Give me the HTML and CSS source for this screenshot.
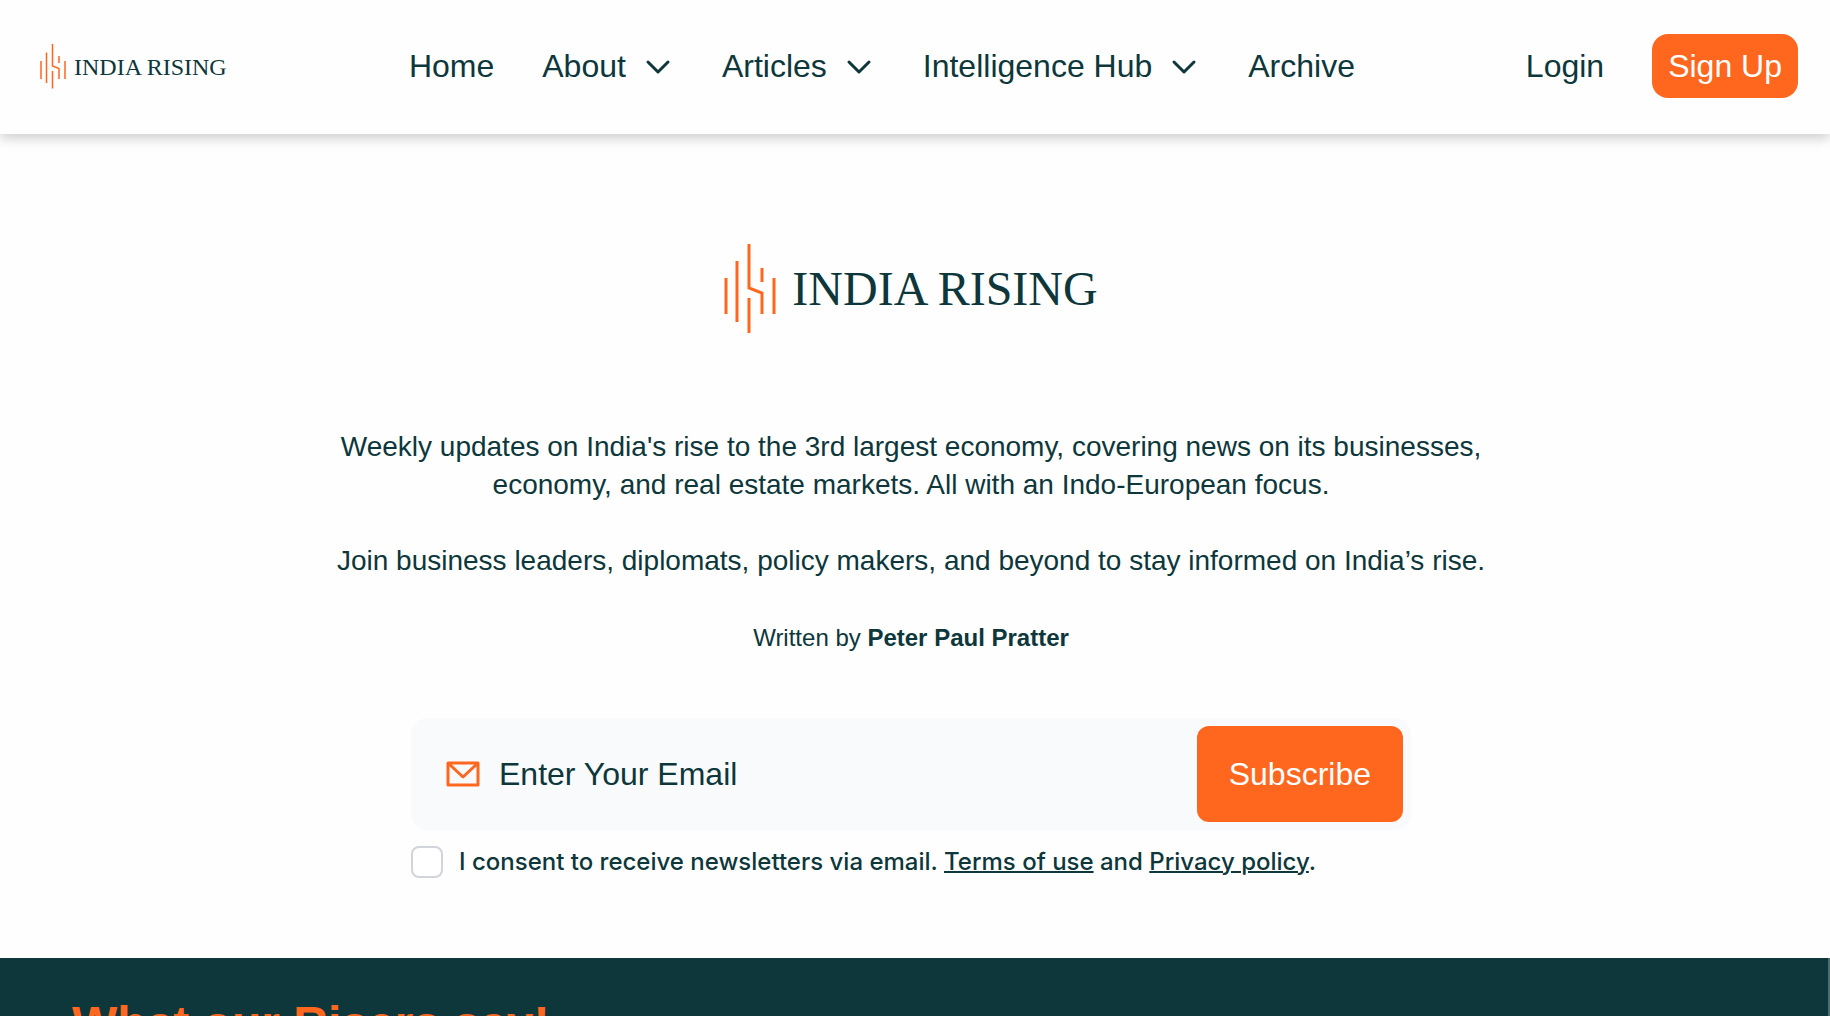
FILE: index.html
```html
<!DOCTYPE html>
<html lang="en">
<head>
  <meta charset="utf-8">
  <title>India Rising</title>
  <link rel="stylesheet" href="styles.css">
</head>
<body>
  <svg class="defs" width="0" height="0">
    <symbol id="mark" viewBox="0 0 52 92">
      <path d="M2 36V72M13 19V80M25 2V46L38 51V72M25 56V91M38 26V40M50 36V72" fill="none" stroke="#ff671f" stroke-width="3"/>
    </symbol>
    <symbol id="chevron" viewBox="0 0 32 32">
      <path d="M6 12L16 22L26 12" fill="none" stroke="#0d373b" stroke-width="3" stroke-linecap="round" stroke-linejoin="round"/>
    </symbol>
  </svg>

  <header class="header">
    <a href="#" class="brand">
      <svg class="brand-mark"><use href="#mark"/></svg>
      <span>INDIA RISING</span>
    </a>
    <nav class="nav">
      <a href="#">Home</a>
      <button type="button">About <svg><use href="#chevron"/></svg></button>
      <button type="button">Articles <svg><use href="#chevron"/></svg></button>
      <button type="button">Intelligence Hub <svg><use href="#chevron"/></svg></button>
      <a href="#">Archive</a>
    </nav>
    <div class="account">
      <a href="#">Login</a>
      <a href="#" class="signup">Sign Up</a>
    </div>
  </header>

  <main class="hero">
    <div class="hero-logo">
      <svg class="hero-mark"><use href="#mark"/></svg>
      <span>INDIA RISING</span>
    </div>
    <p class="intro">
      Weekly updates on India's rise to the 3rd largest economy, covering news on its businesses, economy, and real estate markets. All with an Indo-European focus.
    </p>
    <p class="intro">
      Join business leaders, diplomats, policy makers, and beyond to stay informed on India’s rise.
    </p>
    <p class="author">Written by <strong>Peter Paul Pratter</strong></p>

    <form class="subscribe">
      <div class="email-box">
        <svg class="mail" viewBox="0 0 34 26">
          <path d="M2 2H32V24H2ZM2 2L17 16L32 2" fill="none" stroke="#ff671f" stroke-width="3" stroke-linejoin="round"/>
        </svg>
        <input type="email" placeholder="Enter Your Email" aria-label="Email">
        <button type="submit">Subscribe</button>
      </div>
      <div class="consent">
        <input type="checkbox" id="consent">
        <label for="consent">I consent to receive newsletters via email. <a href="#">Terms of use</a> and <a href="#">Privacy policy</a>.</label>
      </div>
    </form>
  </main>

  <section class="reviews">
    <h2>What our Risers say!</h2>
  </section>
</body>
</html>
```
FILE: styles.css
```css
* {
  box-sizing: border-box;
}

body {
  margin: 0;
  height: 100vh;
  overflow: hidden;
  display: flex;
  flex-direction: column;
  background: #fefefe;
  color: #0d373b;
  font-family: "Liberation Sans", Arial, sans-serif;
}

a {
  color: inherit;
  text-decoration: none;
}

button,
input {
  font: inherit;
  color: inherit;
  border: none;
  background: none;
  padding: 0;
  margin: 0;
}

button {
  cursor: pointer;
}

.defs {
  position: absolute;
}

.header {
  display: flex;
  justify-content: space-between;
  align-items: center;
  flex-shrink: 0;
  padding: 34px 32px 36px;
  font-size: 32px;
  line-height: 40px;
  box-shadow: 0 4px 12px rgba(0, 0, 0, 0.2);
}

.brand {
  display: flex;
  align-items: center;
  gap: 8px;
  width: 206px;
  padding-left: 8px;
  font-family: "Liberation Serif", "Times New Roman", serif;
  font-size: 24px;
  line-height: 24px;
  white-space: nowrap;
}

.brand-mark {
  width: 26px;
  height: 46px;
}

.nav,
.account {
  display: flex;
  align-items: center;
  gap: 48px;
}

.nav button {
  display: flex;
  align-items: center;
  gap: 16px;
}

.nav svg {
  width: 32px;
  height: 32px;
}

.signup {
  padding: 12px 16px;
  border-radius: 16px;
  background: #ff671f;
  color: #fff;
}

.hero {
  display: flex;
  flex-direction: column;
  align-items: center;
  flex-shrink: 0;
  padding: 108px 8px 80px 0;
  text-align: center;
}

.hero-logo {
  display: flex;
  align-items: center;
  gap: 16px;
  margin-bottom: 94px;
  font-family: "Liberation Serif", "Times New Roman", serif;
  font-size: 48px;
  line-height: 48px;
}

.brand span,
.hero-logo span {
  padding-top: 2px;
}

.hero-mark {
  width: 52px;
  height: 92px;
}

.intro {
  max-width: 1180px;
  margin: 0 0 38px;
  font-size: 28px;
  line-height: 38px;
}

.author {
  margin: 0 0 60px;
  font-size: 24px;
  line-height: 40px;
}

.subscribe {
  width: 100%;
  max-width: 1000px;
}

.email-box {
  display: flex;
  align-items: center;
  padding: 8px 8px 8px 35px;
  border-radius: 16px;
  background: #f9fafc;
  font-size: 32px;
  line-height: 40px;
}

.mail {
  width: 34px;
  height: 26px;
  margin-right: 19px;
}

.email-box input {
  flex: 1;
  min-width: 0;
  height: 48px;
  outline: none;
}

.email-box input::placeholder {
  color: #0d373b;
  opacity: 1;
}

.email-box button {
  padding: 28px 32px;
  border-radius: 12px;
  background: #ff671f;
  color: #fff;
}

.consent {
  display: flex;
  align-items: center;
  gap: 16px;
  margin-top: 16px;
  font-family: Inter, sans-serif;
  font-size: 24px;
  font-weight: 500;
  line-height: 32px;
}

.consent input {
  appearance: none;
  width: 32px;
  height: 32px;
  border: 2px solid #d1d5db;
  border-radius: 8px;
  background: #fff;
}

.consent a {
  text-decoration: underline;
  text-decoration-thickness: 2px;
}

.reviews {
  flex: 1;
  min-height: 0;
  overflow: hidden;
  padding: 38px 72px;
  border-right: 2px solid #4d6a6d;
  background: #0d373b;
}

.reviews h2 {
  margin: 0;
  color: #ff671f;
  font-size: 48px;
  line-height: 56px;
}
```
